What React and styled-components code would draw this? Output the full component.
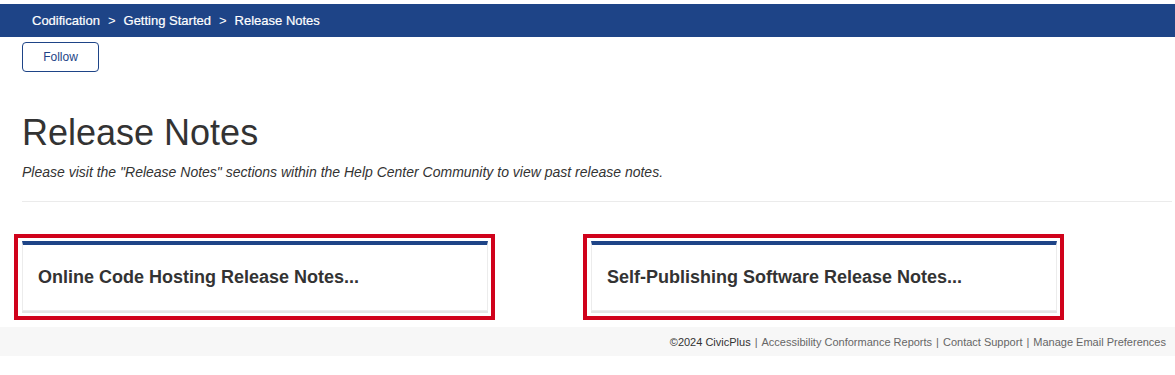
import React from 'react';
import styled, { createGlobalStyle } from 'styled-components';

const GlobalStyle = createGlobalStyle`
  html, body {
    margin: 0;
    padding: 0;
    background: #fff;
    font-family: "Liberation Sans", Arial, sans-serif;
    color: #333;
  }
`;

const Page = styled.div`
  padding-top: 4px;
`;

const TopBar = styled.nav`
  display: flex;
  align-items: center;
  height: 33px;
  padding: 0 32px;
  background-color: #1e4487;
`;

const Crumb = styled.span`
  color: #fff;
  font-size: 13px;
  -webkit-text-stroke: 0.2px #fff;
`;

const Separator = styled.span`
  color: #fff;
  font-size: 13px;
  margin: 0 8px;
`;

const Main = styled.main`
  padding: 5px 3px 0 22px;
`;

const FollowButton = styled.button`
  width: 77px;
  height: 30px;
  background: #fff;
  border: 1px solid #1e4487;
  border-radius: 4px;
  color: #1e4487;
  font-family: "Liberation Sans", Arial, sans-serif;
  font-size: 12px;
  cursor: pointer;
`;

const Title = styled.h1`
  margin: 41px 0 0;
  font-size: 36px;
  font-weight: normal;
  line-height: 40px;
  color: #333;
`;

const Intro = styled.p`
  margin: 9px 0 0;
  font-size: 14px;
  font-style: italic;
  line-height: 20px;
  color: #333;
`;

const Rule = styled.hr`
  margin: 19px 0 0;
  border: 0;
  border-top: 1px solid #ebebeb;
`;

const CardRow = styled.div`
  display: flex;
  gap: 88px;
  margin: 32px 0 0 -8px;
`;

const Highlight = styled.div`
  width: 466px;
  border: 4px solid #d0021b;
  padding: 3px 3px 5px 4px;
`;

const Card = styled.a`
  display: flex;
  align-items: center;
  box-sizing: border-box;
  height: 70px;
  padding: 0 15px;
  background: #fff;
  border: 1px solid #ececec;
  border-top: 4px solid #1e4487;
  box-shadow: 0 2px 0 #e4e4e4;
  color: #333;
  font-size: 18px;
  font-weight: bold;
  text-decoration: none;
`;

const Footer = styled.footer`
  display: flex;
  justify-content: flex-end;
  align-items: center;
  height: 29px;
  margin-top: 7px;
  padding: 0 9px;
  background: #f7f7f7;
  font-size: 11px;
  color: #666;
`;

const Copyright = styled.span`
  color: #333;
`;

const FooterLink = styled.a`
  color: #666;
  text-decoration: none;
`;

const Pipe = styled.span`
  margin: 0 4px;
`;

const crumbs = ['Codification', 'Getting Started', 'Release Notes'];
const cards = ['Online Code Hosting Release Notes...', 'Self-Publishing Software Release Notes...'];
const links = ['Accessibility Conformance Reports', 'Contact Support', 'Manage Email Preferences'];

export default function App() {
  return (
    <Page>
      <GlobalStyle />
      <TopBar>
        {crumbs.map((c, i) => (
          <React.Fragment key={c}>
            {i > 0 && <Separator>&gt;</Separator>}
            <Crumb>{c}</Crumb>
          </React.Fragment>
        ))}
      </TopBar>
      <Main>
        <FollowButton>Follow</FollowButton>
        <Title>Release Notes</Title>
        <Intro>Please visit the "Release Notes" sections within the Help Center Community to view past release notes.</Intro>
        <Rule />
        <CardRow>
          {cards.map((c) => (
            <Highlight key={c}>
              <Card href="#">{c}</Card>
            </Highlight>
          ))}
        </CardRow>
      </Main>
      <Footer>
        <Copyright>©2024 CivicPlus</Copyright>
        {links.map((l) => (
          <React.Fragment key={l}>
            <Pipe>|</Pipe>
            <FooterLink href="#">{l}</FooterLink>
          </React.Fragment>
        ))}
      </Footer>
    </Page>
  );
}
